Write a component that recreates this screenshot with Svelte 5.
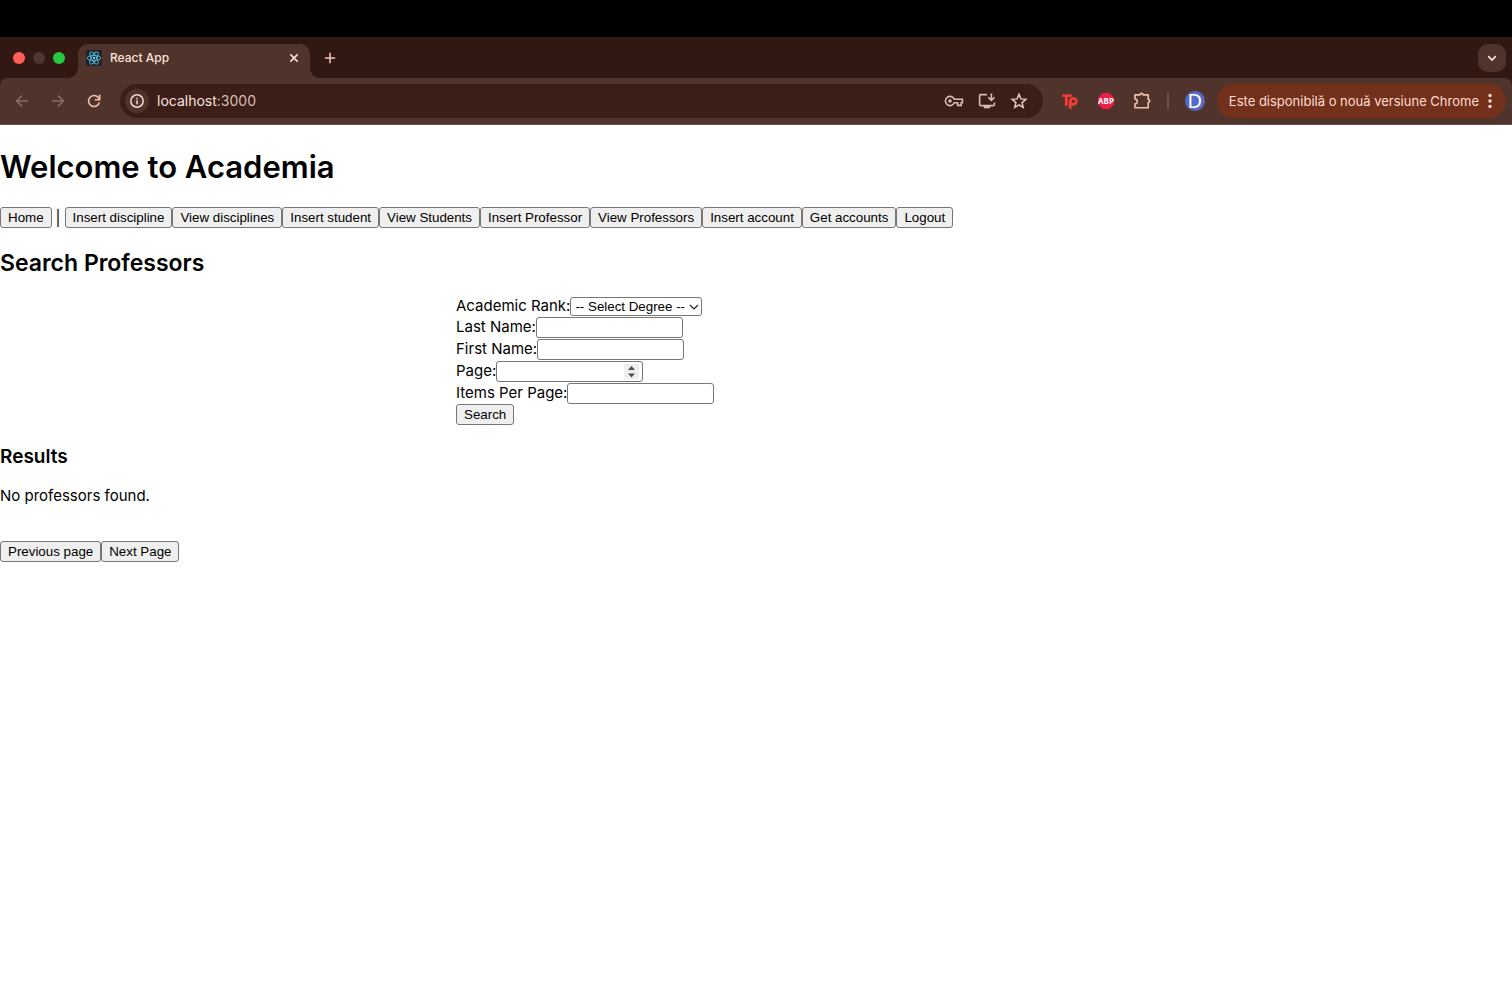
<script>
  const sections = [
    'Insert discipline',
    'View disciplines',
    'Insert student',
    'View Students',
    'Insert Professor',
    'View Professors',
    'Insert account',
    'Get accounts',
    'Logout'
  ];
  const degrees = ['-- Select Degree --'];
  let degree = $state(degrees[0]);
  let lastName = $state('');
  let firstName = $state('');
  let page = $state('');
  let perPage = $state('');
</script>

<div class="bezel"></div>
<header class="browser">
  <div class="tabstrip">
    <div class="lights"><i class="close"></i><i class="min"></i><i class="max"></i></div>
    <div class="tab">
      <svg width="16" height="16" viewBox="0 0 16 16">
        <rect width="16" height="16" rx="1" fill="#20232a" />
        <g fill="none" stroke="#53b9d6" stroke-width="0.9">
          <ellipse cx="8" cy="8" rx="6.8" ry="2.6" />
          <ellipse cx="8" cy="8" rx="6.8" ry="2.6" transform="rotate(60 8 8)" />
          <ellipse cx="8" cy="8" rx="6.8" ry="2.6" transform="rotate(120 8 8)" />
        </g>
        <circle cx="8" cy="8" r="1.2" fill="#61dafb" />
      </svg>
      <span class="title">React App</span>
      <button class="icon" aria-label="Close tab">
        <svg width="16" height="16" viewBox="0 0 16 16" fill="none" stroke="#fbe3dc" stroke-width="1.5"><path d="M4.400 4.400l7.200 7.200M11.600 4.400l-7.200 7.200" /></svg>
      </button>
    </div>
    <button class="icon newtab" aria-label="New tab">
      <svg width="16" height="16" viewBox="0 0 16 16" fill="none" stroke="#eec0b2" stroke-width="1.6"><path d="M8 2.800v10.400M2.800 8h10.400" /></svg>
    </button>
    <button class="icon tabsearch" aria-label="Search tabs">
      <svg width="16" height="16" viewBox="0 0 16 16" fill="none" stroke="#fbe3dc" stroke-width="1.700"><path d="M4.200 6.200L8 10l3.800-3.800" /></svg>
    </button>
  </div>

  <div class="toolbar">
    <div class="nav">
      <button class="icon" aria-label="Back">
        <svg width="16" height="16" viewBox="0 0 16 16" fill="none" stroke="#8d6d64" stroke-width="1.5"><path d="M14 8H3M8 2.600L2.600 8 8 13.400" /></svg>
      </button>
      <button class="icon" aria-label="Forward">
        <svg width="16" height="16" viewBox="0 0 16 16" fill="none" stroke="#8d6d64" stroke-width="1.5"><path d="M2 8h11M8 2.600L13.400 8 8 13.400" /></svg>
      </button>
      <button class="icon" aria-label="Reload">
        <svg width="16" height="16" viewBox="0 0 16 16" fill="none" stroke="#efbfb0" stroke-width="1.6"><path d="M13.400 9.400A5.500 5.500 0 1 1 12.200 4.400l1.400 1.700" /><path d="M13.700 1.800v4.900H8.900" /></svg>
      </button>
    </div>
    <div class="omnibox">
      <button class="icon info" aria-label="Site information">
        <svg width="16" height="16" viewBox="0 0 16 16" fill="none" stroke="#f3d9d1" stroke-width="1.5"><circle cx="8" cy="8" r="6.2" /><path d="M8 7.300v3.900M8 4.700v1.500" /></svg>
      </button>
      <span class="url">localhost<span>:3000</span></span>
      <button class="icon" aria-label="Passwords">
        <svg width="20" height="16" viewBox="0 0 20 16" fill="none" stroke="#d9bdb5" stroke-width="1.6"><path d="M10.200 6.200A4.600 4.600 0 1 0 10.200 9.800h3.400v2.600h3.600V9.800h1.200V6.200z" /><circle cx="6" cy="8" r="1.800" fill="#d9bdb5" stroke="none" /></svg>
      </button>
      <button class="icon" aria-label="Install app">
        <svg width="18" height="18" viewBox="0 0 18 18" fill="none" stroke="#d9bdb5" stroke-width="1.6"><path d="M9 2.600H2.600q-1 0-1 1v9q0 1 1 1h12.800q1 0 1-1V10.500" /><path d="M13.400 1.500v6.500M10.200 5.200l3.200 3.200 3.200-3.200" /><path d="M5.800 15h6.400" stroke-width="2.600" /></svg>
      </button>
      <button class="icon" aria-label="Bookmark this page">
        <svg width="18" height="18" viewBox="0 0 18 18" fill="none" stroke="#e3c8c0" stroke-width="1.5"><path d="M9 2.300l1.900 4.600 5 .4-3.800 3.300 1.100 4.800L9 12.800l-4.200 2.600 1.100-4.800-3.800-3.300 5-.4z" /></svg>
      </button>
    </div>
    <div class="extensions">
      <svg width="18" height="16" viewBox="0 0 18 16" fill="none" stroke="#f53b38" stroke-width="2.800"><path d="M1.300 2.600h9.400M5.300 2.600v10.200" /><circle cx="12.300" cy="8.300" r="3" /><path d="M9.200 7v8.800" /></svg>
      <svg width="18" height="18" viewBox="0 0 18 18"><path d="M5.700 1h6.600L17 5.700v6.600L12.300 17H5.700L1 12.300V5.700z" fill="#ed1e45" /><text x="9" y="12" text-anchor="middle" class="abp">ABP</text></svg>
      <svg width="18" height="18" viewBox="0 0 18 18" fill="none" stroke="#efbfb0" stroke-width="1.6" stroke-linejoin="round"><path d="M2 2.900H7A1.500 1.500 0 0 1 10 2.900H15.200V7.500A1.500 1.500 0 0 1 15.200 10.500V15.800H2V11.700A2.300 2.300 0 0 0 2 7.100z" /></svg>
    </div>
    <i class="divider"></i>
    <span class="avatar">D</span>
    <button class="update">
      Este disponibilă o nouă versiune Chrome
      <svg width="4" height="16" viewBox="0 0 4 16" fill="#ffdcd0"><circle cx="2" cy="2.500" r="1.700" /><circle cx="2" cy="8" r="1.700" /><circle cx="2" cy="13.500" r="1.700" /></svg>
    </button>
  </div>
</header>

<main>
  <h1>Welcome to Academia</h1>
  <nav>
    <button>Home</button><span class="pipe">|</span>{#each sections as section}<button>{section}</button>{/each}
  </nav>

  <h2>Search Professors</h2>
  <form onsubmit={(e) => e.preventDefault()}>
    <div class="row rank">
      <label for="rank">Academic Rank:</label>
      <span class="control">
        <select id="rank" bind:value={degree}>
          {#each degrees as d}<option>{d}</option>{/each}
        </select>
        <svg class="chevron" width="10" height="8" viewBox="0 0 10 8" fill="none" stroke="#222" stroke-width="1.2"><path d="M1 2l4 4 4-4" /></svg>
      </span>
    </div>
    <div class="row"><label for="last">Last Name:</label><input id="last" type="text" bind:value={lastName} /></div>
    <div class="row"><label for="first">First Name:</label><input id="first" type="text" bind:value={firstName} /></div>
    <div class="row">
      <label for="page">Page:</label>
      <span class="control">
        <input id="page" class="number" type="number" bind:value={page} />
        <svg class="spinner" width="15" height="15" viewBox="0 0 15 15"><rect width="15" height="15" fill="#efefef" /><path d="M4 6l3.500-4L11 6zM4 9.500h7l-3.500 4z" fill="#4d4d4d" /></svg>
      </span>
    </div>
    <div class="row"><label for="items">Items Per Page:</label><input id="items" type="text" bind:value={perPage} /></div>
    <button type="submit">Search</button>
  </form>

  <h3>Results</h3>
  <p>No professors found.</p>
  <div class="pager"><button>Previous page</button><button>Next Page</button></div>
</main>

<style>
  :global(body) {
    margin: 0;
    background: #fff;
    color: #000;
    font-family: Inter, sans-serif;
  }
  svg { display: block; flex: none; }
  .bezel { height: 37px; background: #000; }
  .browser { background: #321812; }
  .icon {
    display: flex;
    align-items: center;
    justify-content: center;
    padding: 0;
    border: 0;
    background: none;
  }

  .tabstrip { display: flex; align-items: center; height: 41px; padding-right: 6px; }
  .lights { display: flex; gap: 8px; width: 65px; padding-left: 13px; }
  .lights i { width: 12px; height: 12px; border-radius: 50%; }
  .close { background: #ff5f57; }
  .min { background: #4d3733; }
  .max { background: #28c840; }
  .tab {
    position: relative;
    display: flex;
    align-items: center;
    align-self: flex-end;
    box-sizing: border-box;
    width: 232px;
    height: 34px;
    padding: 0 8px 6px;
    border-radius: 10px 10px 0 0;
    background: #50342c;
  }
  .tab::before,
  .tab::after {
    content: '';
    position: absolute;
    bottom: 0;
    width: 10px;
    height: 10px;
  }
  .tab::before { right: 100%; background: radial-gradient(circle at 0 0, transparent 10px, #50342c 10px); }
  .tab::after { left: 100%; background: radial-gradient(circle at 100% 0, transparent 10px, #50342c 10px); }
  .title { flex: 1; padding-left: 8px; color: #fbe3dc; font-size: 12px; font-weight: 500; line-height: 16px; }
  .newtab { margin-left: 12px; }
  .tabsearch { width: 28px; height: 28px; margin-left: auto; border-radius: 10px; background: #50342c; }

  .toolbar {
    display: flex;
    align-items: center;
    box-sizing: border-box;
    height: 47px;
    padding: 0 6px 0 14px;
    border-bottom: 1px solid #68504a;
    border-radius: 8px 8px 0 0;
    background: #50342c;
  }
  .nav { display: flex; gap: 20px; margin-right: 18px; }
  .omnibox {
    display: flex;
    flex: 1;
    align-items: center;
    gap: 14px;
    height: 34px;
    padding: 0 15px 0 5px;
    border-radius: 17px;
    background: #3a1e17;
  }
  .info { width: 24px; height: 24px; border-radius: 50%; background: #50342c; }
  .url { flex: 1; margin-left: -6px; color: #fbe3dc; font-size: 14px; line-height: 18px; }
  .url span { color: #d9bdb5; }
  .extensions { display: flex; align-items: center; gap: 18px; margin-left: 18px; }
  .abp { fill: #fff; font: bold 8px "Noto Sans", sans-serif; }
  .divider { width: 2px; height: 16px; margin: 0 16px; background: #704f46; }
  .avatar {
    width: 20px;
    height: 20px;
    border-radius: 50%;
    background: #5769c6;
    color: #fff;
    font: 20px/20px "Noto Sans", sans-serif;
    text-align: center;
  }
  .update {
    display: flex;
    align-items: center;
    gap: 9px;
    height: 34px;
    margin-left: 12px;
    padding: 0 14px 0 12px;
    border: 0;
    border-radius: 17px;
    background: #73301b;
    color: #ffdcd0;
    font: 400 13px Inter, sans-serif;
    white-space: nowrap;
  }

  h1, h2, h3 { font-weight: 600; }
  h1 { margin: 22px 0 20px; font-size: 31px; line-height: 40px; }
  h2 { margin: 20px 0 18px; font-size: 23px; line-height: 30px; }
  h3 { margin: 20px 0 17px; font-size: 19px; line-height: 24px; }
  p { margin: 0 0 35px; font-size: 15px; line-height: 20px; }
  nav, .pager, .row { display: flex; align-items: center; }
  .pipe { padding: 0 4px; font-size: 15px; line-height: 20px; }
  main button {
    height: 21px;
    padding: 0 7px;
    border: 1px solid #767676;
    border-radius: 3px;
    background: #efefef;
    color: #000;
    font-family: "Liberation Sans", Arial, sans-serif;
    white-space: nowrap;
  }
  form { width: 600px; max-width: 100%; margin: 0 auto; }
  form > button { display: block; }
  .row { height: 22px; }
  .rank { height: 20px; }
  label { font-size: 15px; line-height: 20px; }
  input, select {
    display: block;
    box-sizing: border-box;
    border: 1px solid #767676;
    border-radius: 3px;
    background: #fff;
    color: #000;
    font-family: "Liberation Sans", Arial, sans-serif;
  }
  input { width: 147px; height: 21px; padding: 1px 2px; }
  .control { position: relative; }
  /* The native stepper stays clickable under the drawn one. */
  .number::-webkit-inner-spin-button { opacity: 0; }
  .spinner, .chevron { position: absolute; pointer-events: none; }
  .spinner { top: 3px; right: 4px; }
  .chevron { top: 6px; right: 3px; }
  select { height: 19px; padding: 0 16px 0 4px; appearance: none; }
</style>
